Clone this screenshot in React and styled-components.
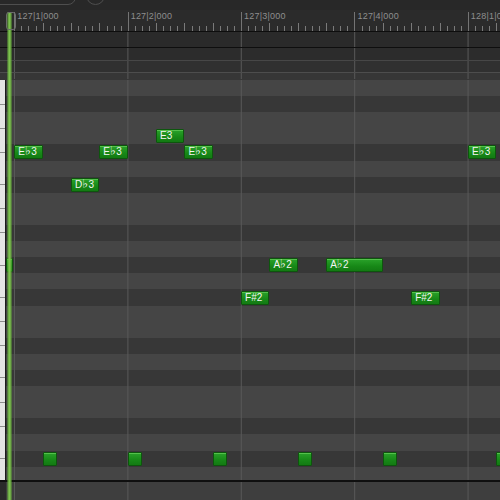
import React from 'react'
import styled, { createGlobalStyle, css } from 'styled-components'

const BAR = 113.4
const STEP = BAR / 16
const ROW = 16.12
const GRID_X = 6
const FIRST_BAR = 14.3

const GlobalStyle = createGlobalStyle`
  html, body { margin: 0; padding: 0; background: #2a2a2a; }
  body { font-family: "Liberation Sans", "DejaVu Sans", Arial, sans-serif; }
`

// vertical bar lines, first one at `offset` px from the element's left edge
const barLines = (offset, color = '#585858') => css`
  background-image: linear-gradient(90deg, ${color} 0 1px, transparent 1px);
  background-size: ${BAR}px 100%;
  background-repeat: repeat-x;
  background-position: ${offset}px 0;
`

const Editor = styled.div`
  position: relative;
  width: 500px;
  height: 500px;
  overflow: hidden;
  display: flex;
  flex-direction: column;
  background: #2a2a2a;
`

const TopStrip = styled.div`
  height: 10px;
  flex: none;
  display: flex;
  align-items: flex-end;
  gap: 10px;
  padding-bottom: 5px;
  box-sizing: border-box;
  overflow: hidden;
  background: #282828;
`

const Pill = styled.div`
  flex: none;
  width: 84px;
  height: 26px;
  margin-left: -8px;
  border: 1px solid #4e4e4e;
  border-radius: 8px;
  box-sizing: border-box;
`

const Knob = styled.div`
  flex: none;
  width: 19px;
  height: 19px;
  border: 1px solid #4e4e4e;
  border-radius: 50%;
  box-sizing: border-box;
`

const Ruler = styled.div`
  height: 22px;
  flex: none;
  display: flex;
  align-items: flex-end;
  padding-left: ${FIRST_BAR}px;
  box-sizing: border-box;
  border-bottom: 1px solid #0d0d0d;
  background: #2b2b2b;
`

const Bar = styled.div`
  flex: none;
  width: ${BAR}px;
  height: 19px;
  box-sizing: border-box;
  border-left: 1px solid #747474;
  display: flex;
  flex-direction: column;
  justify-content: space-between;
`

const BarLabel = styled.span`
  padding-left: 2px;
  font-size: 9px;
  line-height: 9px;
  color: #8e8e8e;
  letter-spacing: 0.2px;
  white-space: nowrap;
`

const Ticks = styled.div`
  display: flex;
  align-items: flex-end;
  height: 8px;
`

const Tick = styled.div`
  flex: 1;
  height: ${p => (p.$beat ? 8 : 5)}px;
  border-left: ${p => (p.$hidden ? 'none' : '1px solid #7a7a7a')};
`

const Band = styled.div`
  flex: none;
  display: flex;
  flex-direction: column;
`

const BandStrip = styled.div`
  height: ${p => p.$h}px;
  box-sizing: border-box;
  border-bottom: 1px solid ${p => p.$line};
  background-color: ${p => p.$bg};
  ${barLines(14)}
`

const Body = styled.div`
  flex: 1;
  display: flex;
  min-height: 0;
  overflow: hidden;
`

const Keys = styled.div`
  flex: none;
  width: 5px;
  display: flex;
  flex-direction: column;
  background: #e4e4e4;
  border-right: 1px solid #1b1b1b;
`

const Key = styled.div`
  flex: none;
  height: ${p => p.$h}px;
  box-sizing: border-box;
  border-bottom: 1px solid #8d8d8d;
`

const Grid = styled.div`
  position: relative;
  flex: 1;
  display: flex;
  flex-direction: column;
`

const Lane = styled.div`
  flex: none;
  height: ${ROW}px;
  background-color: ${p => (p.$black ? '#373737' : '#454545')};
  ${barLines(8)}
`

const Note = styled.div`
  position: absolute;
  height: 14px;
  box-sizing: border-box;
  border: 1px solid #0d560d;
  border-radius: 1px;
  background: linear-gradient(#2aa22a, #178817 60%, #137a13);
  box-shadow: inset 0 1px 0 rgba(140, 230, 120, 0.45);
  color: #f4f4f4;
  font-size: 10px;
  line-height: 12px;
  padding-left: 3px;
  white-space: nowrap;
  overflow: hidden;
`

const Flat = styled.span`
  font-family: "DejaVu Sans", sans-serif;
  font-size: 12px;
  line-height: 0;
  margin-right: 0.5px;
`

const Footer = styled.div`
  height: 18px;
  flex: none;
  display: flex;
  border-top: 2px solid #0f0f0f;
`

const FooterKeys = styled.div`
  width: 6px;
  background: #2a2a2a;
`

const FooterLane = styled.div`
  flex: 1;
  background-color: #3e3e3e;
  ${barLines(8)}
`

const Playhead = styled.div`
  position: absolute;
  left: 7px;
  top: 12px;
  bottom: 0;
  width: 5px;
  background: linear-gradient(90deg, rgba(80, 150, 40, 0.35), #7cc34d 40%, #7cc34d 60%, rgba(80, 150, 40, 0.35));
  pointer-events: none;
`

const PlayheadCap = styled.div`
  position: absolute;
  left: 6px;
  top: 12px;
  width: 10px;
  height: 18px;
  box-sizing: border-box;
  border: 1px solid #6c6c6c;
  border-radius: 3px;
`

// lanes from G3 at the top down to G1
const LANES = [
  'G3', 'F#3', 'F3', 'E3', 'Eb3', 'D3', 'Db3', 'C3', 'B2', 'Bb2', 'A2', 'Ab2',
  'G2', 'F#2', 'F2', 'E2', 'Eb2', 'D2', 'Db2', 'C2', 'B1', 'Bb1', 'A1', 'Ab1', 'G1',
]

const KEY_HEIGHTS = [25, 24, 24, 32, 24, 24, 33, 32, 24, 24, 32, 25, 24, 32, 24]

const NOTES = [
  { pitch: 'Eb3', step: 0, len: 4, label: true },
  { pitch: 'Eb3', step: 12, len: 4, label: true },
  { pitch: 'E3', step: 20, len: 4, label: true },
  { pitch: 'Eb3', step: 24, len: 4, label: true },
  { pitch: 'Db3', step: 8, len: 4, label: true },
  { pitch: 'Eb3', step: 64, len: 4, label: true },
  { pitch: 'Ab2', step: 36, len: 4, label: true },
  { pitch: 'Ab2', step: 44, len: 8, label: true },
  { pitch: 'Ab2', step: 88, len: 4, label: true },
  { pitch: 'F#2', step: 32, len: 4, label: true },
  { pitch: 'F#2', step: 56, len: 4, label: true },
  { pitch: 'Ab1', step: 4, len: 2 },
  { pitch: 'Ab1', step: 16, len: 2 },
  { pitch: 'Ab1', step: 28, len: 2 },
  { pitch: 'Ab1', step: 40, len: 2 },
  { pitch: 'Ab1', step: 52, len: 2 },
  { pitch: 'Ab1', step: 68, len: 2 },
]

const noteName = pitch => {
  const flat = pitch.length === 3 && pitch[1] === 'b'
  if (flat) return <>{pitch[0]}<Flat>♭</Flat>{pitch[2]}</>
  return pitch
}

const BARS = ['127|1|000', '127|2|000', '127|3|000', '127|4|000', '128|1|000']

export default function App() {
  const offset = FIRST_BAR - GRID_X
  return (
    <>
      <GlobalStyle />
      <Editor>
        <TopStrip>
          <Pill />
          <Knob />
        </TopStrip>

        <Ruler>
          {BARS.map(b => (
            <Bar key={b}>
              <BarLabel>{b}</BarLabel>
              <Ticks>
                {Array.from({ length: 16 }, (_, i) => (
                  <Tick key={i} $hidden={i === 0} $beat={i % 4 === 0} />
                ))}
              </Ticks>
            </Bar>
          ))}
        </Ruler>

        <Band>
          <BandStrip $h={16} $bg="#2a2a2a" $line="#0e0e0e" />
          <BandStrip $h={13} $bg="#2c2c2c" $line="#474747" />
          <BandStrip $h={12} $bg="#303030" $line="#4d4d4d" />
          <BandStrip $h={7} $bg="#363636" $line="transparent" />
        </Band>

        <Body>
          <Keys>
            {KEY_HEIGHTS.map((h, i) => <Key key={i} $h={h} />)}
          </Keys>
          <Grid>
            {LANES.map(p => (
              <Lane key={p} $black={p.includes('b') || p.includes('#')} />
            ))}
            <Note style={{ left: 0, top: LANES.indexOf('Ab2') * ROW + 1, width: 7 }} />
            {NOTES.map((n, i) => (
              <Note
                key={i}
                style={{
                  left: offset + n.step * STEP,
                  top: LANES.indexOf(n.pitch) * ROW + 1,
                  width: n.len * STEP,
                }}
              >
                {n.label && noteName(n.pitch)}
              </Note>
            ))}
          </Grid>
        </Body>

        <Footer>
          <FooterKeys />
          <FooterLane />
        </Footer>

        <Playhead />
        <PlayheadCap />
      </Editor>
    </>
  )
}
